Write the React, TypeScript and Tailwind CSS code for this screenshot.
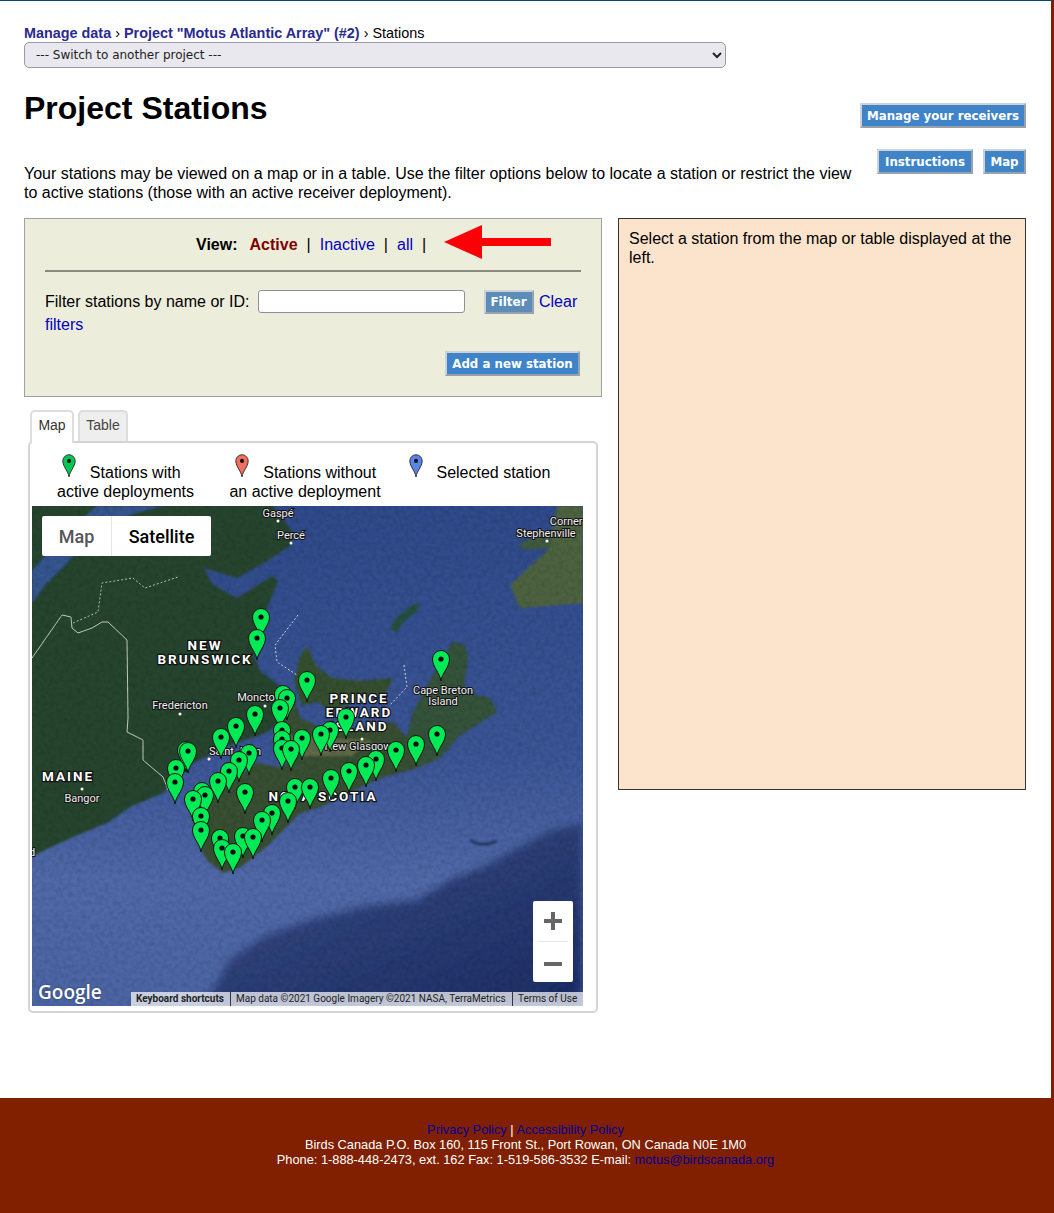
const mapFont = { fontFamily: 'Roboto, sans-serif' }

const pins = [
  [261, 620], [257, 641], [441, 662], [307, 683], [283, 697], [287, 701], [280, 711], [255, 717],
  [346, 720], [236, 729], [282, 733], [330, 733], [321, 737], [437, 737], [221, 740], [302, 741],
  [282, 742], [416, 747], [282, 751], [291, 752], [186, 753], [188, 754], [396, 753], [249, 756],
  [376, 762], [239, 763], [366, 768], [176, 771], [229, 774], [349, 774], [331, 781], [218, 784],
  [175, 785], [295, 790], [310, 790], [202, 794], [245, 795], [205, 798], [193, 802], [288, 804],
  [272, 816], [201, 819], [262, 823], [201, 833], [243, 839], [253, 840], [220, 841], [222, 851],
  [233, 855],
]

const smallLabels: [string, number, number][] = [
  ['Gaspé', 246, 11], ['Percé', 259, 33], ['Corner B', 539, 19], ['Stephenville', 514, 31],
  ['Fredericton', 148, 203], ['Moncton', 227, 195], ['Saint John', 203, 249], ['Bangor', 50, 296],
  ['Cape Breton', 411, 188], ['Island', 411, 199], ['New Glasgow', 326, 244], ['d', 0, 350],
]

const bigLabels: [string, number, number][] = [
  ['NEW', 173, 144], ['BRUNSWICK', 173, 158], ['PRINCE', 327, 197], ['EDWARD', 327, 211],
  ['ISLAND', 327, 225], ['NOVA SCOTIA', 291, 295], ['MAINE', 36, 275],
]

function Pin({ color }: { color: string }) {
  return (
    <svg width="16" height="24" viewBox="-9.5 -9.5 19 33" className="inline-block align-baseline">
      <path d="M0 22C-1 14-8.5 8-8.5 0A8.5 8.5 0 1 1 8.5 0C8.5 8 1 14 0 22Z" fill={color} stroke="#222" strokeWidth="1.2" />
      <circle r="2.8" fill="#111" />
    </svg>
  )
}

function BlueButton({ children, width }: { children: string; width: string }) {
  return (
    <button
      className={`h-[25px] whitespace-nowrap border-2 border-t-[#ccd2d8] border-r-[#98a2ac] border-b-[#98a2ac] border-l-[#ccd2d8] bg-[#3f84c9] pt-[3px] font-['DejaVu_Sans'] text-[11.8px] font-bold text-white ${width}`}
    >
      {children}
    </button>
  )
}

function SatelliteMap() {
  return (
    <svg viewBox="0 0 551 500" width="551" height="500" className="block">
      <defs>
        <linearGradient id="sea" x1="0" y1="0" x2="0" y2="1">
          <stop offset="0" stopColor="#2f4a8a" />
          <stop offset="0.5" stopColor="#3b5596" />
          <stop offset="0.75" stopColor="#5069a8" />
          <stop offset="1" stopColor="#4b65a4" />
        </linearGradient>
        <linearGradient id="deep" x1="0" y1="0" x2="1" y2="1">
          <stop offset="0" stopColor="#3a5088" />
          <stop offset="1" stopColor="#1c2c64" />
        </linearGradient>
        <filter id="soft">
          <feGaussianBlur stdDeviation="0.8" />
        </filter>
        <filter id="softer">
          <feGaussianBlur stdDeviation="4" />
        </filter>
        <filter id="noise">
          <feTurbulence type="fractalNoise" baseFrequency="0.22" numOctaves="3" seed="7" />
          <feColorMatrix values="0 0 0 0 0  0 0 0 0 0  0 0 0 0 0  1.4 0 0 0 -0.5" />
        </filter>
      </defs>
      <rect width="551" height="500" fill="url(#sea)" />
      <path d="M551 317L521 324 495 337 451 361 418 374 385 394 335 400 278 414 231 431 198 454 181 484 170 500H551Z" fill="url(#deep)" filter="url(#softer)" />
      <g filter="url(#soft)">
        <path
          d="M-2-2H240L262 28 258 40 235 55 205 72 172 62 180 78 205 92 240 70 246 75 236 100 228 118 222 150 228 165 245 178 262 192 268 212 298 226 330 222 361 216 375 232 381 206 401 169 421 136 433 139 436 152 431 186 458 192 465 206 428 229 408 252 385 262 351 271 320 285 288 301 268 307 235 340 210 360 191 367 175 354 168 341 158 304 178 294 211 267 225 257 250 262 262 250 240 238 250 215 232 228 195 240 160 258 131 287 98 301 75 317 41 331-2 351Z"
          fill="#28452f"
        />
        <path d="M262 192L268 212 298 226 330 222 361 216 375 232 385 262 351 271 320 285 288 301 268 307 235 340 210 360 191 367 175 354 168 341 158 304 178 294 211 267 225 257 250 262 262 250 240 238 250 215Z" fill="#385032" />
        <path d="M375 232L381 206 401 169 421 136 433 139 436 152 431 186 458 192 465 206 428 229 408 252 385 262Z" fill="#34523a" />
        <path d="M240 228L300 232 340 235 320 250 270 250Z" fill="#7c7a55" opacity="0.6" />
        <path d="M262 175L268 150 275 140 284 160 300 172 330 175 361 172 355 185 325 195 300 205 285 196 270 200Z" fill="#35502f" />
        <path d="M478 79L518 42 525 0H551V97L488 102Z" fill="#4d6341" />
        <path d="M485 39L505 30 522 26 518 42 495 44Z" fill="#3f5a3f" />
        <path d="M358 122L364 112 378 100 388 97 386 104 372 116 364 127Z" fill="#28503f" />
        <path d="M0 97L12 80 30 62 60 30 100 8 130 0H65L40 22 20 42 0 65Z" fill="#35558f" />
        <path d="M438 334Q450 342 465 335" fill="none" stroke="#24365f" strokeWidth="2.5" />
      </g>
      <g fill="none">
        <path d="M0 152L30 109 39 111 40 122 46 127 60 122 70 116 76 116 95 134 96 212 95 226 111 234 111 254 118 260 131 271 136 284" stroke="#c6cdbd" />
        <path d="M41 117L66 106 70 77 101 72 113 82 146 71" stroke="#b9c4ae" strokeDasharray="2 2" />
        <path d="M266 109L243 139 245 156 265 169M372 159L375 181 358 199" stroke="#d5dbe6" strokeDasharray="2 2" />
      </g>
      <rect width="551" height="500" filter="url(#noise)" opacity="0.16" />
      <g fill="#fff">
        <circle cx="246" cy="15" r="1.5" /><circle cx="259" cy="37" r="1.5" /><circle cx="148" cy="208" r="1.5" />
        <circle cx="233" cy="200" r="1.5" /><circle cx="50" cy="283" r="1.5" /><circle cx="177" cy="253" r="1.5" />
        <circle cx="515" cy="35" r="1.5" /><circle cx="330" cy="233" r="1.5" />
      </g>
      <g style={mapFont} fontSize="11" textAnchor="middle" fill="#f0f0f0" stroke="#111" strokeWidth="2" paintOrder="stroke">
        {smallLabels.map(([name, x, y]) => (
          <text key={name} x={x} y={y}>{name}</text>
        ))}
      </g>
      <g style={mapFont} fontSize="13.5" fontWeight="700" letterSpacing="2" textAnchor="middle" fill="#fff" stroke="#111" strokeWidth="2.5" paintOrder="stroke">
        {bigLabels.map(([name, x, y]) => (
          <text key={name} x={x} y={y}>{name}</text>
        ))}
      </g>
      {pins.map(([x, y]) => (
        <g key={`${x}-${y}`} transform={`translate(${x - 32} ${y - 509})`}>
          <path d="M0 22C-1 14-8.5 8-8.5 0A8.5 8.5 0 1 1 8.5 0C8.5 8 1 14 0 22Z" fill="#00ea55" stroke="#111" />
          <circle r="2.6" fill="#0a0a0a" />
        </g>
      ))}
    </svg>
  )
}

export default function App() {
  return (
    <div className="font-['Liberation_Sans',Arial,sans-serif] text-base text-black">
      <div className="h-[1098px] border-t border-r-[3px] border-t-[#004a70] border-r-[#802000] bg-white px-6 pt-[24px]">
        <div className="text-[14.4px] leading-4">
          <a className="font-bold text-[#2a2a90]">Manage data</a> ›{' '}
          <a className="font-bold text-[#2a2a90]">Project "Motus Atlantic Array" (#2)</a> › Stations
        </div>
        <select className="mt-[1px] block h-[26px] w-[702px] rounded-[5px] border border-[#9a9aa8] bg-[#e8e8ee] pl-[7px] font-['DejaVu_Sans'] text-xs text-[#222]">
          <option>--- Switch to another project ---</option>
        </select>

        <div className="flex">
          <div className="w-[832px]">
            <h1 className="mt-[20px] text-[32px] leading-10 font-bold">Project Stations</h1>
            <p className="mt-[36px] leading-[19px]">
              Your stations may be viewed on a map or in a table. Use the filter options below to locate a station or
              restrict the view to active stations (those with an active receiver deployment).
            </p>
          </div>
          <div className="flex flex-1 flex-col items-end pr-px">
            <div className="mt-[35px] h-[25px]">
              <BlueButton width="w-[166px]">Manage your receivers</BlueButton>
            </div>
            <div className="mt-[21px] flex gap-[10px]">
              <BlueButton width="w-[96px]">Instructions</BlueButton>
              <BlueButton width="w-[43px]">Map</BlueButton>
            </div>
          </div>
        </div>

        <div className="mt-[16px] flex items-start gap-4">
          <div className="w-[578px]">
            <div className="h-[179px] border border-[#a0a0a0] bg-[#ededdc] px-5 pt-[14px]">
              <div className="flex h-[24px] items-center pl-[151px]">
                <b>View:</b>
                <b className="ml-[12px] text-[#800000]">Active</b>
                <span className="ml-[9px]">|</span>
                <a className="ml-[9px] text-[#0000c0]">Inactive</a>
                <span className="ml-[9px]">|</span>
                <a className="ml-[9px] text-[#0000c0]">all</a>
                <span className="ml-[9px]">|</span>
                <svg width="108" height="36" viewBox="0 0 108 36" className="ml-[18px] -translate-y-[2px]">
                  <path d="M0 17L38 0V13H107V21H38V34Z" fill="#fb0007" />
                </svg>
              </div>
              <div className="mt-[13px] h-[2px] bg-[#8a8a80]" />
              <div className="mt-[18px] leading-[23px]">
                Filter stations by name or ID:
                <input className="ml-[8px] -my-[1px] h-[23px] w-[207px] -translate-y-px rounded-[3px] border border-[#8f8f9d] bg-white align-middle" />
                <button className="ml-[19px] -my-[2px] h-[24px] w-[50px] -translate-y-px border-2 border-t-[#ccd2d8] border-r-[#98a2ac] border-b-[#98a2ac] border-l-[#ccd2d8] bg-[#5b8db8] align-middle font-['DejaVu_Sans'] text-xs font-bold text-white">
                  Filter
                </button>{' '}
                <a className="ml-px text-[#0000c0]">Clear filters</a>
              </div>
              <div className="mt-[15px] flex justify-end pr-px">
                <BlueButton width="w-[135px]">Add a new station</BlueButton>
              </div>
            </div>

            <div className="mt-[13px] ml-[6px] flex gap-1 text-sm leading-4">
              <div className="z-10 -mb-[2px] h-[33px] w-[44px] rounded-t-[5px] border-2 border-b-0 border-[#ddd] bg-white pt-[5px] text-center text-[#333]">
                Map
              </div>
              <div className="h-[31px] w-[50px] rounded-t-[5px] border-2 border-b-0 border-[#ddd] bg-[#eee] pt-[5px] text-center text-[#444]">
                Table
              </div>
            </div>
            <div className="ml-[4px] h-[572px] w-[570px] rounded-[5px] border-2 border-[#d4d4d4] bg-white pt-[11px] pl-[2px]">
              <div className="flex h-[48px] pl-[25px] leading-[19px]">
                <div className="w-[137px] whitespace-nowrap text-center">
                  <Pin color="#00c853" /> <span className="mr-[9px] ml-[8px]">Stations with</span>
                  <br />
                  active deployments
                </div>
                <div className="ml-[35px] w-[152px] whitespace-nowrap text-center">
                  <Pin color="#f0705f" /> <span className="ml-[9px]">Stations without</span>
                  <br />
                  an active deployment
                </div>
                <div className="ml-[27px] w-[142px] whitespace-nowrap text-left">
                  <Pin color="#5a85e8" /> <span className="ml-[8px]">Selected station</span>
                </div>
              </div>
              <div className="relative mt-[4px] h-[500px] w-[551px] overflow-hidden" style={mapFont}>
                <SatelliteMap />
                <div className="absolute top-[10px] left-[10px] flex text-[18px] font-medium">
                  <div className="flex h-[40px] w-[69px] items-center justify-center rounded-l-[2px] bg-white text-[#565656]">
                    Map
                  </div>
                  <div className="flex h-[40px] w-[100px] items-center justify-center rounded-r-[2px] border-l border-[#e6e6e6] bg-white">
                    Satellite
                  </div>
                </div>
                <div className="absolute top-[395px] left-[501px] flex h-[81px] w-[40px] flex-col items-center rounded-[2px] bg-white">
                  <svg width="18" height="18" viewBox="0 0 18 18" className="mt-[11px]">
                    <path d="M7 0h4v7h7v4h-7v7H7v-7H0V7h7z" fill="#666" />
                  </svg>
                  <div className="mt-[11px] h-px w-[30px] bg-[#e6e6e6]" />
                  <svg width="18" height="4" viewBox="0 0 18 4" className="mt-[20px]">
                    <path d="M0 0h18v4H0z" fill="#666" />
                  </svg>
                </div>
                <div className="absolute bottom-[2px] left-[6px] font-['Open_Sans'] text-[19px] leading-6 font-semibold text-white [text-shadow:0_0_2px_#0006]">
                  Google
                </div>
                <div className="absolute right-0 bottom-0 flex h-[14px] w-[452px] bg-white/70 text-[10px] leading-[14px] text-[#222]">
                  <div className="w-[99px] pl-[5px] font-bold">Keyboard shortcuts</div>
                  <div className="w-[282px] border-l border-[#334] pl-[5px]">
                    Map data ©2021 Google Imagery ©2021 NASA, TerraMetrics
                  </div>
                  <div className="border-l border-[#334] pl-[5px]">Terms of Use</div>
                </div>
              </div>
            </div>
          </div>

          <div className="h-[572px] w-[408px] border border-[#333] bg-[#fce4cc] px-[10px] pt-[10px] leading-[19px]">
            Select a station from the map or table displayed at the left.
          </div>
        </div>
      </div>
      <footer className="h-[115px] bg-[#802000] pt-[24px] pr-[3px] text-center text-[12.8px] leading-[15px] text-white">
        <div>
          <a className="text-[#000099]">Privacy Policy</a> | <a className="text-[#000099]">Accessibility Policy</a>
        </div>
        <div>Birds Canada P.O. Box 160, 115 Front St., Port Rowan, ON Canada N0E 1M0</div>
        <div>
          Phone: 1-888-448-2473, ext. 162 Fax: 1-519-586-3532 E-mail: <a className="text-[#000099]">motus@birdscanada.org</a>
        </div>
      </footer>
    </div>
  )
}
